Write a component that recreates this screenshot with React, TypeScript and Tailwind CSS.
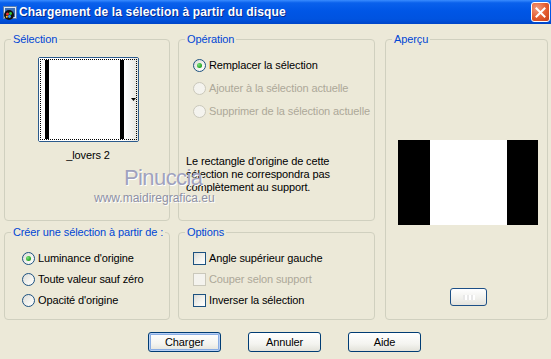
import React from "react";

function Radio({ checked, disabled }: { checked?: boolean; disabled?: boolean }) {
  return (
    <span
      className={
        "w-[13px] h-[13px] rounded-full border flex items-center justify-center shrink-0 " +
        (disabled
          ? "border-[#CAC8BB] bg-[#F4F3EE]"
          : "border-[#1C5180] bg-[linear-gradient(135deg,#DCDCD7_0%,#F4F4F0_60%,#FFFFFF_100%)]")
      }
    >
      {checked && (
        <span className="w-[5px] h-[5px] rounded-full bg-[radial-gradient(circle_at_35%_35%,#7BE37B,#21A121_70%)]" />
      )}
    </span>
  );
}

function Check({ disabled }: { disabled?: boolean }) {
  return (
    <span
      className={
        "w-[13px] h-[13px] border shrink-0 " +
        (disabled
          ? "border-[#CAC8BB] bg-[#F4F3EE]"
          : "border-[#1C5180] bg-[linear-gradient(135deg,#DCDCD7_0%,#F4F4F0_60%,#FFFFFF_100%)]")
      }
    />
  );
}

function Group({
  title,
  className,
  children,
}: {
  title: string;
  className?: string;
  children?: React.ReactNode;
}) {
  return (
    <fieldset className={"border border-[#D0D0BF] rounded-[4px] min-w-0 whitespace-nowrap " + (className ?? "")}>
      <legend className="ml-[6px] px-[2px] text-[#0046D5] leading-[13px] whitespace-nowrap">{title}</legend>
      {children}
    </fieldset>
  );
}

function Btn({ label, def }: { label: string; def?: boolean }) {
  return (
    <div
      className={
        "w-[73px] h-[20px] rounded-[3px] border border-[#003C74] flex items-center justify-center bg-[linear-gradient(to_bottom,#FFFFFF_0%,#F4F4F0_60%,#E3E2DA_100%)] " +
        (def ? "shadow-[inset_0_0_0_1px_#B8D0F5,inset_0_0_0_2px_#89ADE4]" : "")
      }
    >
      {label}
    </div>
  );
}

export default function App() {
  return (
    <div className="relative w-[551px] h-[359px] overflow-hidden bg-[#ECE9D8] text-[11px] leading-[13px] tracking-[-0.12px] text-black font-['Liberation_Sans',Arial,sans-serif]">
      {/* Title bar */}
      <div className="h-[24px] flex items-center bg-[linear-gradient(to_bottom,#3A8CFF_0%,#0A61EC_12%,#0056E6_45%,#0053E0_80%,#0046C8_100%)]">
        <svg width="16" height="16" viewBox="0 0 16 16" className="ml-[2px] mt-[2px]">
          <rect x="1.5" y="1.5" width="13" height="12" fill="#DDE8F5" stroke="#5C7FB0" />
          <rect x="3" y="3" width="10" height="9" fill="#3B6FB8" />
          <circle cx="7" cy="10" r="5" fill="#111" />
          <circle cx="5.5" cy="9" r="1.5" fill="#E33" />
          <circle cx="8.5" cy="8.5" r="1.4" fill="#3C3" />
          <circle cx="7.5" cy="11.5" r="1.4" fill="#39F" />
          <circle cx="4.8" cy="11.8" r="1" fill="#FC3" />
        </svg>
        <span className="ml-[1px] text-white font-bold text-[12px] tracking-[0.15px] [text-shadow:1px_1px_0_#0A2A8A]">
          Chargement de la sélection à partir du disque
        </span>
        <div className="ml-auto mr-[1px] w-[19px] h-[20px] rounded-[3px] border border-white flex items-center justify-center bg-[radial-gradient(circle_at_30%_30%,#F29B80,#E35B2E_55%,#C7401A)]">
          <svg width="11" height="11" viewBox="0 0 11 11">
            <path d="M1.5 1.5 L9.5 9.5 M9.5 1.5 L1.5 9.5" stroke="white" strokeWidth="2" strokeLinecap="square" />
          </svg>
        </div>
      </div>

      {/* Body */}
      <div className="pl-[4px] pt-[9px] grid grid-cols-[166px_205px_173px] grid-rows-[188px_94px] gap-y-[5px]">
        <Group title="Sélection" className="col-start-1 row-start-1 flex flex-col items-center">
          <div className="mt-[11px] ml-[2px] relative w-[101px] h-[85px] rounded-[2px] border border-[#2B5A8C] bg-white flex">
            <div className="flex-1 bg-white flex pl-[6px] py-[2px]">
              <div className="w-[4px] bg-black" />
              <div className="w-[71px]" />
              <div className="w-[4px] bg-black" />
            </div>
            <div className="w-[14px] bg-[linear-gradient(to_right,#FFFFFF,#E6E5E0)] flex items-center justify-end pr-[2px]">
              <svg width="5" height="3" viewBox="0 0 5 3">
                <path d="M0 0 H5 L2.5 3 Z" fill="black" />
              </svg>
            </div>
            <div className="absolute inset-[1px] border border-dotted border-black" />
          </div>
          <div className="mt-[7px] ml-[2px]">_lovers 2</div>
        </Group>

        <Group title="Opération" className="col-start-2 row-start-1 ml-[8px]">
          <div className="pl-[14px] pt-[13px] flex flex-col gap-[10px]">
            <div className="flex items-center gap-[3px]">
              <Radio checked />
              <span>Remplacer la sélection</span>
            </div>
            <div className="flex items-center gap-[3px] text-[#ACA899]">
              <Radio disabled />
              <span>Ajouter à la sélection actuelle</span>
            </div>
            <div className="flex items-center gap-[3px] text-[#ACA899]">
              <Radio disabled />
              <span>Supprimer de la sélection actuelle</span>
            </div>
          </div>
          <p className="mt-[37px] pl-[7px]">
            Le rectangle d'origine de cette
            <br />
            sélection ne correspondra pas
            <br />
            complètement au support.
          </p>
        </Group>

        <Group title="Aperçu" className="col-start-3 row-start-1 row-span-2 ml-[10px] flex flex-col items-center">
          <div className="mt-[94px] ml-[2px] w-[140px] h-[85px] flex">
            <div className="w-[32px] bg-black" />
            <div className="flex-1 bg-white" />
            <div className="w-[31px] bg-black" />
          </div>
          <div className="mt-[63px] ml-[4px] w-[37px] h-[18px] rounded-[3px] border border-[#1C4F86] bg-[linear-gradient(to_bottom,#FFFFFF,#F0F0EC_60%,#E4E3DC)] flex items-center justify-center">
            <span className="w-[12px] h-[5px] bg-[repeating-linear-gradient(90deg,#E8E8E8_0_2px,#FFFFFF_2px_4px)]" />
          </div>
        </Group>

        <Group title="Créer une sélection à partir de :" className="col-start-1 row-start-2">
          <div className="pl-[17px] pt-[13px] flex flex-col gap-[8px]">
            <div className="flex items-center gap-[3px]">
              <Radio checked />
              <span>Luminance d'origine</span>
            </div>
            <div className="flex items-center gap-[3px]">
              <Radio />
              <span>Toute valeur sauf zéro</span>
            </div>
            <div className="flex items-center gap-[3px]">
              <Radio />
              <span>Opacité d'origine</span>
            </div>
          </div>
        </Group>

        <Group title="Options" className="col-start-2 row-start-2 ml-[8px]">
          <div className="pl-[14px] pt-[13px] flex flex-col gap-[8px]">
            <div className="flex items-center gap-[3px]">
              <Check />
              <span>Angle supérieur gauche</span>
            </div>
            <div className="flex items-center gap-[3px] text-[#ACA899]">
              <Check disabled />
              <span>Couper selon support</span>
            </div>
            <div className="flex items-center gap-[3px]">
              <Check />
              <span>Inverser la sélection</span>
            </div>
          </div>
        </Group>
      </div>

      {/* Buttons */}
      <div className="mt-[12px] pl-[148px] flex gap-[27px]">
        <Btn label="Charger" def />
        <Btn label="Annuler" />
        <Btn label="Aide" />
      </div>

      {/* Watermark */}
      <div className="absolute left-[124px] top-[167px] pointer-events-none text-[22px] leading-[22px] tracking-[-0.6px] text-[#A0A2BE] [text-shadow:1px_1px_0_#FFFFFF]">
        Pinuccia
      </div>
      <div className="absolute left-[94px] top-[192px] pointer-events-none text-[12px] leading-[13px] tracking-normal text-[#8D90A4] [text-shadow:1px_1px_0_#FFFFFF]">
        www.maidiregrafica.eu
      </div>
    </div>
  );
}
